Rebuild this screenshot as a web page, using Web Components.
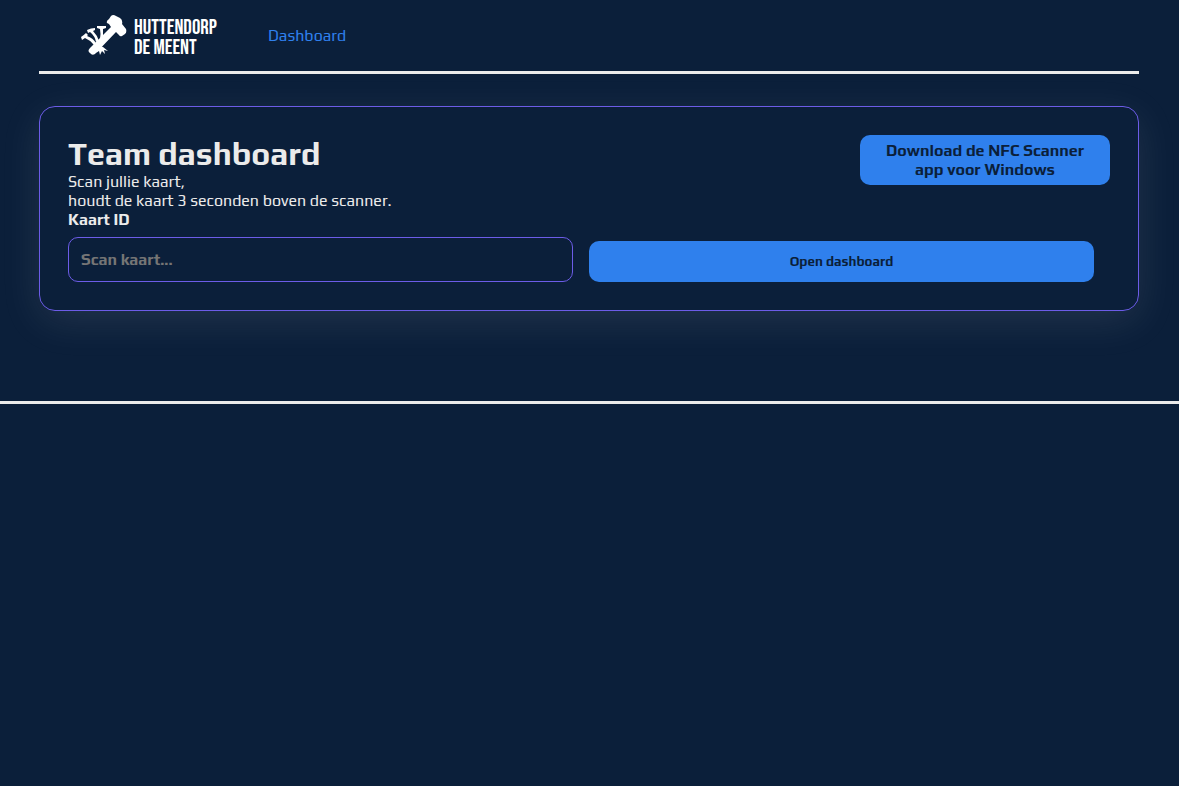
<!DOCTYPE html>
<html lang="nl">
<head>
<meta charset="utf-8">
<meta name="viewport" content="width=device-width, initial-scale=1">
<title>Team dashboard - Huttendorp de Meent</title>
<style>
  :root {
    --bg: #0b1f3a;
    --text: #ebebeb;
    --blue: #2f80ed;
    --purple: #6c5ce7;
    /* whole-pixel side margin that centres the 1100px column */
    --side: max(0px, round(down, calc(50vw - 550px), 1px));
  }
  body {
    margin: 0;
    background: var(--bg);
    color: var(--text);
    font: 16px/19px Play, Roboto, "Liberation Sans", sans-serif;
  }
</style>
</head>
<body>
<site-header>
  <site-logo></site-logo>
  <nav-link href="#dashboard">Dashboard</nav-link>
</site-header>
<main>
  <dashboard-card>
    <span slot="title">Team dashboard</span>
    <span slot="intro">Scan jullie kaart,<br>houdt de kaart 3 seconden boven de scanner.</span>
    <download-link slot="action" href="#download">Download de NFC Scanner app voor Windows</download-link>
    <card-form></card-form>
  </dashboard-card>
</main>
<site-footer></site-footer>

<script>
const define = (name, html, setup) => {
  const template = document.createElement('template');
  template.innerHTML = '<style>*{box-sizing:border-box}</style>' + html;
  customElements.define(name, class extends HTMLElement {
    connectedCallback() {
      if (this.shadowRoot) return;
      this.attachShadow({ mode: 'open' }).append(template.content.cloneNode(true));
      if (setup) setup(this);
    }
  });
};
const passHref = host => {
  host.shadowRoot.querySelector('a').href = host.getAttribute('href');
};

define('site-header', `
  <style>
    :host { display: block; }
    header {
      display: flex; align-items: center; gap: 51px;
      max-width: 1100px; height: 74px; margin-left: var(--side);
      padding-left: 42px;
      border-bottom: 3px solid var(--text);
    }
  </style>
  <header><slot></slot></header>`);

define('site-logo', `
  <style>
    :host { display: block; width: 136px; }
    a { display: flex; align-items: center; gap: 7px; color: #fff; text-decoration: none; }
    svg { flex: none; display: block; }
    span { font: 21px/20px "Bebas Neue", "Roboto Condensed", Roboto, sans-serif; white-space: nowrap; padding-top: 4px; }
  </style>
  <a href="#home">
    <svg width="46" height="42" viewBox="0 0 46 42" fill="#fff" aria-hidden="true">
      <path d="M26 8Q25 6 28 4L30 1Q32-1 35 1L39 3Q42 5 41 9L45 14Q46 17 44 19L41 21Q39 22 38 20L35 17 14 39Q11 41 9 38 6 36 9 33L30 12 28 9Z"/>
      <path d="M0 22Q3 20 5 18L7 20 6 21Q12 23 15 28L13 30Q9 25 4 23L1 25Z"/>
      <path d="M6 15Q10 13 14 13V15L12 16Q16 20 18 26L15 27Q14 21 9 17L7 18Z"/>
      <path d="M16 11H25V13L22 14 22 21 19 24Q20 19 19 14L16 13Z"/>
      <path d="M19 31 22 32 27 36 23 35 24 39 21 36 19 40 18 36 15 38Z"/>
    </svg>
    <span>HUTTENDORP<br>DE MEENT</span>
  </a>`);

define('nav-link', `
  <style>
    :host { display: block; }
    a { color: var(--blue); text-decoration: none; }
  </style>
  <nav><a><slot></slot></a></nav>`, passHref);

define('dashboard-card', `
  <style>
    :host {
      display: block; box-sizing: border-box;
      max-width: 1100px; margin: 32px 0 0 var(--side); padding: 28px;
      border: 1px solid var(--purple); border-radius: 16px;
      box-shadow: 0 10px 40px rgba(235, 235, 235, .1);
    }
    .top { display: flex; justify-content: space-between; align-items: flex-start; gap: 16px; }
    h1 { margin: 0; font-size: 32px; line-height: 37px; }
    p { margin: 0; }
  </style>
  <section>
    <div class="top">
      <div>
        <h1><slot name="title"></slot></h1>
        <p><slot name="intro"></slot></p>
      </div>
      <slot name="action"></slot>
    </div>
    <slot></slot>
  </section>`);

define('download-link', `
  <style>
    :host { display: block; flex: none; width: 250px; }
    a {
      display: block; padding: 6px 24px; border-radius: 10px;
      background: var(--blue); color: var(--bg);
      font-weight: bold; text-align: center; text-decoration: none;
    }
  </style>
  <a><slot></slot></a>`, passHref);

define('card-form', `
  <style>
    :host { display: block; }
    form { display: grid; grid-template-columns: 1fr 1fr; gap: 16px; align-items: end; margin-right: 16px; }
    label { display: block; margin-bottom: 8px; font-weight: bold; }
    input {
      display: block; width: 100%; height: 45px; padding: 12px;
      border: 1px solid var(--purple); border-radius: 10px;
      background: transparent; color: var(--text);
      font: inherit; font-weight: bold; outline: none;
    }
    input::placeholder { color: #757575; opacity: 1; }
    button {
      height: 41px; border: 0; border-radius: 10px;
      background: var(--blue); color: var(--bg);
      font-family: inherit; font-weight: bold; cursor: pointer;
    }
  </style>
  <form>
    <div>
      <label for="card">Kaart ID</label>
      <input id="card" type="text" placeholder="Scan kaart..." autocomplete="off">
    </div>
    <button type="button">Open dashboard</button>
  </form>`);

define('site-footer', `
  <style>
    :host { display: block; margin-top: 90px; }
    footer { border-top: 3px solid var(--text); }
  </style>
  <footer></footer>`);
</script>
</body>
</html>
